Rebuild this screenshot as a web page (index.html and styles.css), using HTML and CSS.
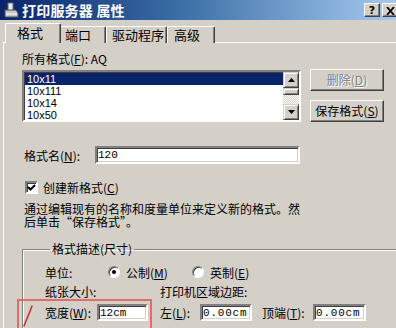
FILE: index.html
```html
<!DOCTYPE html>
<html lang="zh-CN">
<head>
<meta charset="utf-8">
<title>打印服务器 属性</title>
<link rel="stylesheet" href="styles.css">
</head>
<body>
<div class="win">
  <div class="titlebar">
    <svg class="ticon" width="16" height="16" viewBox="0 0 16 16">
      <path d="M5 1 L10 1 L10 9 L5 9 Z" fill="#e8e8e8" stroke="#707070" stroke-width="1"/>
      <path d="M2 8 L13 8 L15 11 L15 15 L2 15 Z" fill="#c8c8c8" stroke="#505050" stroke-width="1"/>
      <path d="M3 12 L14 12" stroke="#fff" stroke-width="1"/>
    </svg>
    <span class="title">打印服务器 属性</span>
    <div class="tbtns">
      <span class="tbtn">?</span>
      <span class="tbtn">
        <svg width="9" height="8" viewBox="0 0 9 8"><path d="M1 0 L8 8 M8 0 L1 8" stroke="#000" stroke-width="1.8"/></svg>
      </span>
    </div>
  </div>

  <div class="tabs">
    <div class="tab sel">格式</div>
    <div class="tab t2">端口</div>
    <div class="tab t3">驱动程序</div>
    <div class="tab t4">高级</div>
  </div>

  <div class="panel">
    <div class="lbl">所有格式(<u>F</u>): AQ</div>

    <div class="listrow">
      <div class="list">
        <div class="items">
          <div class="item sel">10x11</div>
          <div class="item">10x111</div>
          <div class="item">10x14</div>
          <div class="item">10x50</div>
        </div>
        <div class="vscroll">
          <div class="sbtn"><svg width="7" height="4" viewBox="0 0 7 4"><path d="M3.5 0 L7 4 L0 4 Z" fill="#000"/></svg></div>
          <div class="thumb"></div>
          <div class="track"></div>
          <div class="sbtn"><svg width="7" height="4" viewBox="0 0 7 4"><path d="M0 0 L7 0 L3.5 4 Z" fill="#000"/></svg></div>
        </div>
      </div>
      <div class="btncol">
        <div class="btn dis">删除(<u>D</u>)</div>
        <div class="btn">保存格式(<u>S</u>)</div>
      </div>
    </div>

    <div class="namerow">
      <span class="namelbl">格式名(<u>N</u>):</span>
      <div class="field namefield">120</div>
    </div>

    <div class="checkrow">
      <span class="check">
        <svg width="9" height="9" viewBox="0 0 9 9"><path d="M1 4 L3.5 6.5 L8 2" fill="none" stroke="#000" stroke-width="2"/></svg>
      </span>
      <span>创建新格式(<u>C</u>)</span>
    </div>

    <p class="desc">通过编辑现有的名称和度量单位来定义新的格式。然<br>后单击“保存格式”。</p>

    <fieldset class="group">
      <legend>格式描述(尺寸)</legend>
      <div class="grow r1">
        <span class="c-unit">单位:</span>
        <span class="radiogrp">
          <span class="radio on"></span><span>公制(<u>M</u>)</span>
        </span>
        <span class="radiogrp">
          <span class="radio"></span><span>英制(<u>E</u>)</span>
        </span>
      </div>
      <div class="grow r2">
        <span class="c-size">纸张大小:</span>
        <span>打印机区域边距:</span>
      </div>
      <div class="grow r3">
        <span class="c-w">宽度(<u>W</u>):</span>
        <div class="field f-w">12cm</div>
        <span class="c-l">左(<u>L</u>):</span>
        <div class="field f-l">0.00cm</div>
        <span class="c-t">顶端(<u>T</u>):</span>
        <div class="field f-t">0.00cm</div>
      </div>
    </fieldset>
  </div>

  <div class="mark"></div>
  <svg class="slash" width="14" height="24" viewBox="0 0 14 24">
    <path d="M11 2 C9 8 6 14 3 22" fill="none" stroke="#c83030" stroke-width="1.6" stroke-linecap="round"/>
  </svg>
</div>
</body>
</html>
```

FILE: styles.css
```css
html, body {
  margin: 0;
  padding: 0;
}
body {
  width: 396px;
  height: 328px;
  overflow: hidden;
  background: #d4d0c8;
  font-family: "Noto Sans CJK SC", "DejaVu Sans", sans-serif;
  font-size: 12px;
  color: #000;
}
u { text-decoration: underline; text-underline-offset: 1px; }

.win {
  position: relative;
  width: 396px;
  height: 328px;
  overflow: hidden;
}

/* title bar */
.titlebar {
  height: 20px;
  display: flex;
  align-items: center;
  background: linear-gradient(to right, #0a246a 0%, #3a6ea5 45%, #a6caf0 100%);
  color: #fff;
}
.ticon { margin-left: 3px; margin-right: 3px; flex: none; }
.title {
  font-weight: bold;
  font-size: 14px;
  line-height: 16px;
  letter-spacing: 0.2px;
}
.tbtns {
  margin-left: auto;
  display: flex;
  gap: 2px;
  margin-right: -2px;
}
.tbtn {
  width: 12px;
  height: 11px;
  background: #d4d0c8;
  border: 1px solid;
  border-color: #fff #404040 #404040 #fff;
  box-shadow: inset -1px -1px #808080;
  display: flex;
  align-items: center;
  justify-content: center;
  font-family: "DejaVu Sans", sans-serif;
  font-weight: bold;
  font-size: 11px;
  line-height: 11px;
  color: #000;
  padding: 1px 1px 0 1px;
}

/* tabs */
.tabs {
  display: flex;
  align-items: flex-end;
  height: 23px;
  padding-left: 5px;
  margin-bottom: -1px;
  position: relative;
  z-index: 1;
}
.tab {
  height: 16px;
  line-height: 16px;
  font-size: 13px;
  border-top: 1px solid #fff;
  border-left: 1px solid #fff;
  border-right: 1px solid #404040;
  box-shadow: inset -1px 0 #808080;
  border-radius: 2px 2px 0 0;
  box-sizing: content-box;
  background: #d4d0c8;
}
.tab.sel {
  width: 43px;
  height: 19px;
  line-height: 18px;
  padding-left: 11px;
}
.tab.t2 { width: 40px; padding-left: 4px; border-left: none; }
.tab.t3 { width: 54px; padding-left: 5px; border-left: 1px solid #fff; }
.tab.t4 { width: 40px; padding-left: 6px; border-left: 1px solid #fff; }

/* panel */
.panel {
  margin-left: 3px;
  width: 389px;
  height: 300px;
  border-top: 1px solid #fff;
  border-left: 1px solid #fff;
  border-right: 1px solid #404040;
  box-shadow: inset -1px 0 #808080;
  padding: 9px 0 0 18px;
}

.lbl {
  line-height: 14px;
  height: 14px;
}

.listrow {
  display: flex;
  align-items: flex-start;
  margin-top: 4px;
  height: 52px;
}
.list {
  width: 275px;
  height: 48px;
  border: 2px solid;
  border-color: #808080 #fff #fff #808080;
  box-shadow: inset 1px 1px #404040;
  background: #fff;
  display: flex;
  overflow: hidden;
}
.items {
  flex: 1;
  padding-top: 1px;
  padding-left: 1px;
  overflow: hidden;
}
.item {
  height: 12px;
  line-height: 12px;
  padding-left: 2px;
  font-family: "Liberation Sans", Arial, sans-serif;
  font-size: 11px;
}
.item.sel {
  background: #0a246a;
  color: #fff;
}
.vscroll {
  width: 16px;
  display: flex;
  flex-direction: column;
}
.sbtn {
  background: #d4d0c8;
  border: 1px solid;
  border-color: #d4d0c8 #404040 #404040 #d4d0c8;
  box-shadow: inset 1px 1px #fff, inset -1px -1px #808080;
  display: flex;
  align-items: center;
  justify-content: center;
  box-sizing: border-box;
  flex: none;
  height: 16px;
}
.thumb {
  height: 7px;
  background: #d4d0c8;
  border: 1px solid;
  border-color: #d4d0c8 #404040 #404040 #d4d0c8;
  box-shadow: inset 1px 1px #fff, inset -1px -1px #808080;
  flex: none;
  box-sizing: border-box;
}
.track {
  flex: 1;
  background-color: #fff;
  background-image: conic-gradient(#d4d0c8 25%, #fff 0 50%, #d4d0c8 0 75%, #fff 0);
  background-size: 2px 2px;
}

.btncol {
  margin-left: 9px;
  margin-top: -1px;
  display: flex;
  flex-direction: column;
  gap: 9px;
}
.btn {
  width: 72px;
  height: 20px;
  line-height: 20px;
  text-align: center;
  border: 1px solid;
  border-color: #fff #404040 #404040 #fff;
  box-shadow: inset -1px -1px #808080;
  font-size: 12px;
}
.btn.dis {
  color: #808080;
  text-shadow: 1px 1px #fff;
}

.namerow {
  margin-top: 24px;
  display: flex;
  align-items: center;
  height: 18px;
  padding-left: 2px;
}
.namelbl { width: 71px; }
.field {
  box-sizing: border-box;
  height: 18px;
  border: 2px solid;
  border-color: #808080 #fff #fff #808080;
  box-shadow: inset 1px 1px #404040, inset -1px -1px #d4d0c8;
  background: #fff;
  font-family: "Liberation Mono", monospace;
  font-size: 11px;
  line-height: 14px;
  padding-left: 1px;
}
.namefield { width: 205px; }

.checkrow {
  margin-top: 16px;
  display: flex;
  align-items: center;
  height: 14px;
  padding-left: 3px;
}
.check {
  box-sizing: border-box;
  width: 13px;
  height: 13px;
  border: 2px solid;
  border-color: #808080 #fff #fff #808080;
  box-shadow: inset 1px 1px #404040;
  background: #fff;
  display: flex;
  align-items: center;
  justify-content: center;
  margin-right: 5px;
}

.desc {
  margin: 8px 0 0 2px;
  line-height: 13px;
}

.group {
  margin: 14px 0 0 0;
  width: 357px;
  border: 1px solid #808080;
  box-shadow: inset 1px 1px #fff, 1px 1px #fff;
  padding: 9px 0 10px 22px;
  min-inline-size: 0;
}
.group legend {
  padding: 0 2px;
  margin-left: 5px;
  line-height: 14px;
}
.grow {
  display: flex;
  align-items: center;
}
.r1 { height: 14px; }
.r2 { height: 14px; margin-top: 5px; }
.r3 { height: 17px; margin-top: 6px; }
.c-unit { width: 63px; }
.radiogrp {
  display: flex;
  align-items: center;
  width: 84px;
}
.radio {
  box-sizing: border-box;
  width: 12px;
  height: 12px;
  border-radius: 50%;
  background: #fff;
  border: 1px solid;
  border-color: #808080 #fff #fff #808080;
  box-shadow: inset 1px 1px #404040;
  margin-right: 6px;
  display: flex;
  align-items: center;
  justify-content: center;
}
.radio.on::after {
  content: "";
  width: 4px;
  height: 4px;
  border-radius: 50%;
  background: #000;
}
.c-size { width: 115px; }
.c-w { width: 52px; }
.f-w { width: 51px; height: 17px; }
.c-l { width: 40px; margin-left: 12px; }
.f-l { width: 52px; height: 17px; letter-spacing: 0.8px; }
.c-t { width: 51px; margin-left: 10px; }
.f-t { width: 53px; height: 17px; letter-spacing: 0.8px; }

/* red annotation drawn over the screenshot */
.mark {
  position: absolute;
  left: 17px;
  top: 299px;
  width: 131px;
  height: 40px;
  border: 2px solid rgba(226, 90, 90, 0.85);
}
.slash {
  position: absolute;
  left: 21px;
  top: 304px;
}
```
